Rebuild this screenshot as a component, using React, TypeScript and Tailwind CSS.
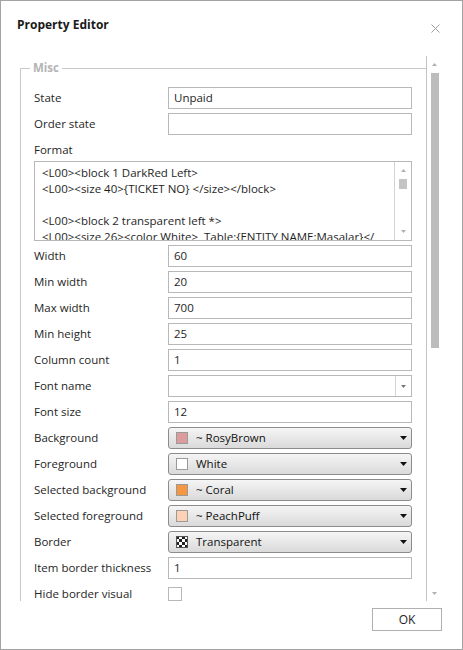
import React from 'react';

const Tri = ({ w = 5, h = 3, color = '#a6a6a6', down = true }: { w?: number; h?: number; color?: string; down?: boolean }) => (
  <svg width={w} height={h} viewBox={`0 0 ${w} ${h}`} className="block">
    {down ? (
      <polygon points={`0,0 ${w},0 ${w / 2},${h}`} fill={color} />
    ) : (
      <polygon points={`0,${h} ${w},${h} ${w / 2},0`} fill={color} />
    )}
  </svg>
);

const TextInput = ({ value }: { value: string }) => (
  <div className="h-[22px] border border-[#b8b8b8] bg-white flex items-center pl-[5px] text-[#1e1e1e]">{value}</div>
);

const Combo = () => (
  <div className="h-[22px] border border-[#b8b8b8] bg-white flex">
    <div className="flex-1" />
    <div className="w-[16px] border-l border-[#d4d4d4] flex items-center justify-center">
      <Tri w={5} h={3} color="#777" />
    </div>
  </div>
);

const Checker = () => (
  <svg width="12" height="12" viewBox="0 0 12 12" className="block">
    <rect x="0" y="0" width="12" height="12" fill="#fff" />
    {[0, 1, 2, 3].map((r) =>
      [0, 1, 2, 3].map((c) =>
        (r + c) % 2 === 0 ? <rect key={`${r}-${c}`} x={c * 3} y={r * 3} width="3" height="3" fill="#222" /> : null
      )
    )}
    <rect x="0.5" y="0.5" width="11" height="11" fill="none" stroke="#555" strokeWidth="1" />
  </svg>
);

const ColorSelect = ({ color, name, checker }: { color?: string; name: string; checker?: boolean }) => (
  <div className="h-[22px] rounded-[3px] border border-[#8c8c8c] bg-gradient-to-b from-[#f5f5f5] to-[#dadada] flex items-center pl-[7px] pr-[4px] text-[#111]">
    {checker ? (
      <Checker />
    ) : (
      <div className="w-[12px] h-[12px] border border-[#9a9a9a]" style={{ backgroundColor: color }} />
    )}
    <span className="ml-[8px] flex-1">{name}</span>
    <Tri w={7} h={4} color="#111" />
  </div>
);

const Label = ({ children }: { children: React.ReactNode }) => (
  <div className="h-[22px] flex items-center text-[#262626]">{children}</div>
);

const formatLines = [
  '<L00><block 1 DarkRed Left>',
  '<L00><size 40>{TICKET NO} </size></block>',
  '',
  '<L00><block 2 transparent left *>',
  '<L00><size 26><color White>  Table:{ENTITY NAME:Masalar}</',
];

export default function App() {
  return (
    <div className="w-[463px] h-[650px] border border-[#a3a3a3] bg-white flex flex-col font-['Open_Sans',sans-serif] text-[11.5px] overflow-hidden">
      {/* Header */}
      <div className="h-[55px] flex items-start justify-between pl-[16px] pr-[22px] pt-[15px]">
        <div className="font-bold text-[12px] leading-[18px] text-[#1a1a1a]">Property Editor</div>
        <svg width="9" height="9" viewBox="0 0 9 9" className="mt-[8px]">
          <path d="M0.5 0.5 L8.5 8.5 M8.5 0.5 L0.5 8.5" stroke="#a0a0a0" strokeWidth="1" />
        </svg>
      </div>

      {/* Scroll region */}
      <div className="ml-[19px] w-[422px] h-[545px] flex overflow-hidden">
        <div className="w-[406px] h-full overflow-hidden">
          <fieldset className="mt-[4px] border border-r-0 border-[#c9c9c9] pl-[13px] pt-[11px] pb-[20px]">
            <legend className="ml-[-4px] px-[3px] font-bold text-[#b4b4b4] text-[11.5px] leading-[16px]">Misc</legend>
            <div className="grid grid-cols-[134px_244px] gap-y-[4px]">
              <Label>State</Label>
              <TextInput value="Unpaid" />
              <Label>Order state</Label>
              <TextInput value="" />
              <div className="col-span-2">
                <Label>Format</Label>
                <div className="h-[80px] border border-[#b8b8b8] bg-white flex overflow-hidden">
                  <div className="flex-1 pl-[7px] pt-[3px] leading-[16px] text-[#1e1e1e] whitespace-pre overflow-hidden">
                    {formatLines.map((l, i) => (
                      <div key={i} className="h-[16px]">{l}</div>
                    ))}
                  </div>
                  <div className="w-[17px] border-l border-[#d4d4d4] flex flex-col items-center pt-[7px] pb-[7px]">
                    <Tri w={5} h={3} color="#b0b0b0" down={false} />
                    <div className="mt-[7px] w-[8px] h-[10px] bg-[#c4c4c4]" />
                    <div className="flex-1" />
                    <Tri w={5} h={3} color="#b0b0b0" />
                  </div>
                </div>
              </div>
              <Label>Width</Label>
              <TextInput value="60" />
              <Label>Min width</Label>
              <TextInput value="20" />
              <Label>Max width</Label>
              <TextInput value="700" />
              <Label>Min height</Label>
              <TextInput value="25" />
              <Label>Column count</Label>
              <TextInput value="1" />
              <Label>Font name</Label>
              <Combo />
              <Label>Font size</Label>
              <TextInput value="12" />
              <Label>Background</Label>
              <ColorSelect color="#dc9c9c" name="~ RosyBrown" />
              <Label>Foreground</Label>
              <ColorSelect color="#ffffff" name="White" />
              <Label>Selected background</Label>
              <ColorSelect color="#f79640" name="~ Coral" />
              <Label>Selected foreground</Label>
              <ColorSelect color="#fdd2b4" name="~ PeachPuff" />
              <Label>Border</Label>
              <ColorSelect checker name="Transparent" />
              <Label>Item border thickness</Label>
              <TextInput value="1" />
              <Label>Hide border visual</Label>
              <div className="h-[22px] flex items-center">
                <div className="w-[14px] h-[14px] border border-[#b8b8b8] bg-white" />
              </div>
            </div>
          </fieldset>
        </div>
        {/* Main scrollbar */}
        <div className="w-[16px] h-full border-l border-[#c4c4c4] flex flex-col items-center pt-[7px] pb-[6px]">
          <Tri w={5} h={3} color="#b0b0b0" down={false} />
          <div className="mt-[7px] w-[8px] h-[275px] bg-[#bcbcbc]" />
          <div className="flex-1" />
          <Tri w={5} h={3} color="#b0b0b0" />
        </div>
      </div>

      {/* Footer */}
      <div className="flex justify-end pr-[20px] pt-[7px]">
        <button className="w-[70px] h-[23px] border border-[#b0b0b0] bg-white text-[#1e1e1e] text-[12px] flex items-center justify-center">
          OK
        </button>
      </div>
    </div>
  );
}
